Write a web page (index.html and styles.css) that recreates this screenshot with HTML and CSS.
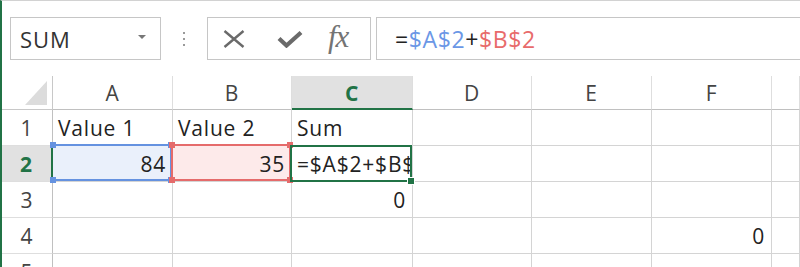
FILE: index.html
```html
<!DOCTYPE html>
<html lang="en">
<head>
    <meta charset="UTF-8">
    <title>Sheet1 - Formula</title>
    <link rel="stylesheet" href="styles.css">
</head>
<body>
    <!-- Formula bar -->
    <div class="formula-bar">
        <div class="name-box">
            <span>SUM</span>
            <span class="caret"></span>
        </div>
        <div class="grip"><i></i><i></i><i></i></div>
        <div class="fn-box">
            <svg class="icon-x" width="22" height="18" viewBox="0 0 22 18">
                <path d="M1.5 1 L20.5 17 M20.5 1 L1.5 17" stroke="#6a6a6a" stroke-width="2.4" fill="none"/>
            </svg>
            <svg class="icon-check" width="26" height="18" viewBox="0 0 26 18">
                <path d="M2 8.5 L9.5 15.5 L24 2.5" stroke="#6a6a6a" stroke-width="4.2" fill="none"/>
            </svg>
            <span class="fx">fx</span>
        </div>
        <div class="formula">=<span class="ref-a">$A$2</span>+<span class="ref-b">$B$2</span></div>
    </div>

    <!-- Grid -->
    <div class="sheet">
        <div class="corner"><span class="tri"></span></div>
        <div class="col-head">A</div>
        <div class="col-head">B</div>
        <div class="col-head active">C</div>
        <div class="col-head">D</div>
        <div class="col-head">E</div>
        <div class="col-head">F</div>
        <div class="col-head"></div>

        <div class="row-head">1</div>
        <div class="cell">Value 1</div>
        <div class="cell">Value 2</div>
        <div class="cell">Sum</div>
        <div class="cell"></div>
        <div class="cell"></div>
        <div class="cell"></div>
        <div class="cell"></div>

        <div class="row-head active">2</div>
        <div class="cell num fill-blue">84
            <span class="sel sel-blue"><i class="h tl"></i><i class="h tr"></i><i class="h bl"></i><i class="h br"></i></span>
        </div>
        <div class="cell num fill-red">35
            <span class="sel sel-red"><i class="h tl"></i><i class="h tr"></i><i class="h bl"></i><i class="h br"></i></span>
        </div>
        <div class="cell editing">
            <span class="clip">=$A$2+$B$2</span>
            <span class="sel sel-green"><i class="fill-handle"></i></span>
        </div>
        <div class="cell"></div>
        <div class="cell"></div>
        <div class="cell"></div>
        <div class="cell"></div>

        <div class="row-head">3</div>
        <div class="cell"></div>
        <div class="cell"></div>
        <div class="cell num">0</div>
        <div class="cell"></div>
        <div class="cell"></div>
        <div class="cell"></div>
        <div class="cell"></div>

        <div class="row-head">4</div>
        <div class="cell"></div>
        <div class="cell"></div>
        <div class="cell"></div>
        <div class="cell"></div>
        <div class="cell"></div>
        <div class="cell num">0</div>
        <div class="cell"></div>

        <div class="row-head">5</div>
        <div class="cell"></div>
        <div class="cell"></div>
        <div class="cell"></div>
        <div class="cell"></div>
        <div class="cell"></div>
        <div class="cell"></div>
        <div class="cell"></div>
    </div>
</body>
</html>
```

FILE: styles.css
```css
html {
    overflow: hidden;
}
body {
    margin: 0;
    width: 798px;
    height: 266px;
    overflow: hidden;
    background-color: #fff;
    border-top: 1px solid #d2d2d2;
    border-left: 2px solid #217346;
    font-family: 'Open Sans', sans-serif;
    color: #222;
}

/* Formula bar */
.formula-bar {
    display: flex;
    align-items: stretch;
    height: 43px;
    margin-top: 16px;
    padding-left: 8px;
}
.name-box {
    border: 1px solid #c6c6c6;
    display: flex;
    align-items: center;
    justify-content: space-between;
    padding: 0 14px 0 9px;
    box-sizing: border-box;
    width: 151px;
    font-size: 22px;
    letter-spacing: 1px;
    color: #333;
}
.caret {
    width: 0;
    height: 0;
    border-left: 4px solid transparent;
    border-right: 4px solid transparent;
    border-top: 4px solid #777;
    margin-top: -3px;
}
.grip {
    width: 46px;
    display: flex;
    flex-direction: column;
    align-items: center;
    justify-content: center;
    gap: 4px;
}
.grip i {
    width: 2px;
    height: 2px;
    background-color: #9a9a9a;
}
.fn-box {
    width: 164px;
    box-sizing: border-box;
    border: 1px solid #c6c6c6;
    display: flex;
    align-items: center;
    padding-left: 15px;
}
.icon-check {
    margin-left: 32px;
}
.fx {
    margin-left: 25px;
    font-family: 'Liberation Serif', serif;
    font-style: italic;
    font-size: 31px;
    color: #747474;
    letter-spacing: -1px;
    margin-top: -3px;
}
.formula {
    flex: 1;
    margin-left: 5px;
    border: 1px solid #c6c6c6;
    border-right: none;
    display: flex;
    align-items: center;
    padding-left: 18px;
    font-size: 23px;
    letter-spacing: 0.6px;
    color: #222;
}
.ref-a {
    color: #6b97e6;
}
.ref-b {
    color: #e86b6b;
}

/* Sheet grid */
.sheet {
    display: grid;
    grid-template-columns: 51px 120px 119px 121px 119px 120px 120px 1fr;
    grid-template-rows: 34px repeat(5, 36px);
    margin-top: 16px;
    font-size: 21px;
    letter-spacing: 0.8px;
}
.corner {
    border-right: 1px solid #c8c8c8;
    border-bottom: 1px solid #c8c8c8;
    position: relative;
}
.tri {
    position: absolute;
    right: 5px;
    bottom: 4px;
    width: 0;
    height: 0;
    border-left: 22px solid transparent;
    border-bottom: 24px solid #dcdcdc;
}
.col-head {
    border-right: 1px solid #dedede;
    border-bottom: 1px solid #c0c0c0;
    text-align: center;
    line-height: 33px;
    padding-top: 1px;
    color: #444;
    box-sizing: border-box;
}
.col-head.active {
    background-color: #e1e1e1;
    border-bottom: 2px solid #217346;
    color: #217346;
    font-weight: bold;
}
.row-head {
    border-right: 1px solid #c0c0c0;
    border-bottom: 1px solid #dedede;
    text-align: center;
    line-height: 37px;
    color: #444;
}
.row-head.active {
    background-color: #e1e1e1;
    border-right: 2px solid #217346;
    color: #217346;
    font-weight: bold;
}
.cell {
    border-right: 1px solid #d4d4d4;
    border-bottom: 1px solid #d4d4d4;
    padding: 0 6px 0 5px;
    line-height: 37px;
    white-space: nowrap;
    overflow: hidden;
    color: #222;
}
.num {
    text-align: right;
}
.fill-blue {
    background-color: #eaf0fb;
    position: relative;
    overflow: visible;
}
.fill-red {
    background-color: #fdeaea;
    position: relative;
    overflow: visible;
}
.editing {
    position: relative;
    overflow: visible;
    padding-left: 5px;
    padding-right: 2px;
}
.clip {
    display: block;
    overflow: hidden;
}

/* Range outlines */
.sel {
    position: absolute;
    top: -2px;
    left: -1px;
    right: 0;
    bottom: 0;
    border: 2px solid;
}
.sel-blue {
    border-color: #6592e0;
    border-left-color: transparent;
}
.sel-red {
    left: -2px;
    border-color: #e56b6b;
}
.sel-green {
    left: -2px;
    top: -1px;
    bottom: -1px;
    border-color: #217346;
}
.h {
    position: absolute;
    width: 6px;
    height: 6px;
}
.sel-blue .h {
    background-color: #6592e0;
}
.sel-red .h {
    background-color: #e56b6b;
}
.tl { top: -4px; left: -4px; }
.tr { top: -4px; right: -4px; }
.bl { bottom: -4px; left: -4px; }
.br { bottom: -4px; right: -4px; }
.fill-handle {
    position: absolute;
    right: -5px;
    bottom: -5px;
    width: 6px;
    height: 6px;
    background-color: #217346;
    border: 1px solid #fff;
}
```
